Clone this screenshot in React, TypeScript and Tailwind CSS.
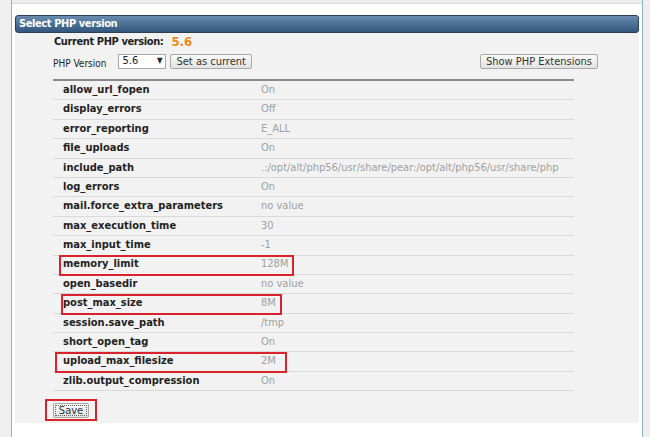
const rows: Array<{ name: string; value: string }> = [
  { name: "allow_url_fopen", value: "On" },
  { name: "display_errors", value: "Off" },
  { name: "error_reporting", value: "E_ALL" },
  { name: "file_uploads", value: "On" },
  { name: "include_path", value: ".:/opt/alt/php56/usr/share/pear:/opt/alt/php56/usr/share/php" },
  { name: "log_errors", value: "On" },
  { name: "mail.force_extra_parameters", value: "no value" },
  { name: "max_execution_time", value: "30" },
  { name: "max_input_time", value: "-1" },
  { name: "memory_limit", value: "128M" },
  { name: "open_basedir", value: "no value" },
  { name: "post_max_size", value: "8M" },
  { name: "session.save_path", value: "/tmp" },
  { name: "short_open_tag", value: "On" },
  { name: "upload_max_filesize", value: "2M" },
  { name: "zlib.output_compression", value: "On" }
];

const btn =
  "h-[15px] whitespace-nowrap rounded-[2px] border border-[#a9a9a9] bg-gradient-to-b from-[#fafafa] to-[#e2e2e2] px-[5px] text-[11px] leading-[13px] text-[#333]";

export default function App() {
  return (
    <div
      className="flex h-[437px] w-[650px] overflow-hidden bg-[#efefef] pl-[11px] pr-[7px]"
      style={{ fontFamily: '"DejaVu Sans Condensed", "DejaVu Sans", Verdana, sans-serif' }}
    >
      <div className="flex flex-1 flex-col border-x border-[#8fb2cf] bg-white">
        <div className="h-[4px] border-b border-[#dcdcdc] bg-[#ececec]" />
        <div className="mx-[3px] mt-[11px] flex flex-col">
          <div className="flex h-[18px] items-center rounded-[3px] border border-[#2c3f55] bg-gradient-to-b from-[#6a8cb1] via-[#4b6f95] to-[#33567c] pl-[3px] text-[11px] font-bold tracking-[-0.4px] text-white">
            Select PHP version
          </div>

          <div className="flex h-[390px] flex-col bg-[#f2f2f2] pl-[38px]">
            <div className="mt-[1px] flex h-[16px] items-center gap-[8px]">
              <span className="ml-[1px] text-[11px] font-bold tracking-[-0.4px] text-[#222]">Current PHP version:</span>
              <span className="text-[13px] font-bold text-[#ee8a16]">5.6</span>
            </div>

            <div className="mt-[3px] flex h-[16px] w-[545px] items-center">
              <span className="mt-[6px] text-[10px] leading-[12px] text-[#222]">PHP Version</span>
              <div className="ml-[12px] flex h-[15px] w-[48px] items-center justify-between border border-[#a9a9a9] bg-white pl-[3px] pr-[3px] text-[11px] text-[#222]">
                <span>5.6</span>
                <span className="text-[8px]">▼</span>
              </div>
              <button className={`${btn} ml-[4px]`}>Set as current</button>
              <button className={`${btn} ml-auto`}>Show PHP Extensions</button>
            </div>

            <div className="relative mt-[10px] w-[521px] border-t-2 border-[#8a8a8a]">
              {rows.map((row) => (
                <div
                  key={row.name}
                  className="flex h-[19.4px] items-center whitespace-nowrap border-b border-[#d9d9d9] text-[11px]"
                >
                  <span className="w-[208px] shrink-0 pl-[10px] font-bold text-[#222]">{row.name}</span>
                  <span className="text-[#a0a0a0]">{row.value}</span>
                </div>
              ))}
              <div className="absolute left-[6px] top-[174px] h-[21px] w-[235px] border-2 border-[#d8222c]" />
              <div className="absolute left-[8px] top-[213px] h-[21px] w-[221px] border-2 border-[#d8222c]" />
              <div className="absolute left-[2px] top-[271px] h-[21px] w-[232px] border-2 border-[#d8222c]" />
            </div>

            <div className="ml-[-8px] mt-[8px] flex h-[22px] w-[52px] items-center justify-center border-2 border-[#d8222c]">
              <button className={`${btn} outline-1 outline-dotted outline-[#666] outline-offset-[-3px]`}>Save</button>
            </div>
          </div>
        </div>
      </div>
    </div>
  );
}
